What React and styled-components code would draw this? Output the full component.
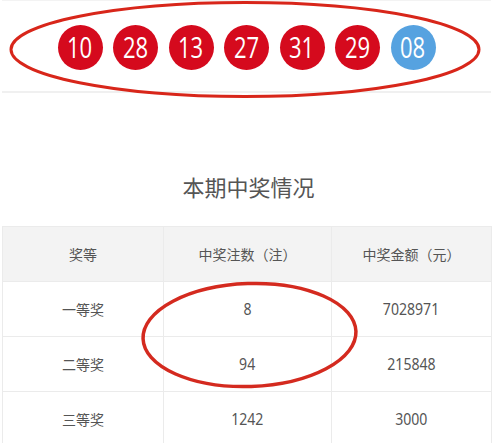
import React from "react";
import styled, { createGlobalStyle } from "styled-components";

const Global = createGlobalStyle`
  html, body { margin: 0; padding: 0; background: #fff; }
  body { width: 500px; height: 443px; overflow: hidden; font-family: "Noto Sans CJK SC", "Noto Sans", sans-serif; }
`;

const Page = styled.div`
  position: relative;
  width: 500px;
  height: 443px;
  overflow: hidden;
`;

const BallBar = styled.div`
  width: 489px;
  margin-left: 2px;
  height: 90px;
  border-top: 1px solid #f3f3f3;
  border-bottom: 2px solid #f0f0f0;
  display: flex;
  align-items: center;
  justify-content: center;
  gap: 10.5px;
  padding-top: 2px;
  box-sizing: border-box;
  height: 93px;
`;

const Ball = styled.div`
  width: 45px;
  height: 45px;
  border-radius: 50%;
  background: ${(p) => (p.$blue ? "#56a2e0" : "#d50a1d")};
  color: #fff;
  display: flex;
  align-items: center;
  justify-content: center;
  font-family: "Open Sans", "Noto Sans", sans-serif;
  font-size: 29px;
  line-height: 1;
`;

const BallNum = styled.span`
  display: inline-block;
  transform: scaleX(0.76);
  margin-top: -1px;
`;

const Title = styled.h2`
  margin: 78px 0 0;
  text-align: center;
  font-weight: 400;
  font-size: 22px;
  line-height: 30px;
  color: #555;
  padding-right: 3px;
`;

const Table = styled.div`
  margin: 25px 0 0 2px;
  width: 489px;
  display: grid;
  grid-template-columns: 161px 168px 160px;
  border-top: 1px solid #ebebeb;
  border-right: 1px solid #ebebeb;
`;

const Cell = styled.div`
  height: 55px;
  box-sizing: border-box;
  border-left: 1px solid #ebebeb;
  border-bottom: 1px solid #ebebeb;
  background: ${(p) => (p.$head ? "#f3f3f3" : "#fff")};
  display: flex;
  align-items: center;
  justify-content: center;
  color: #555;
  font-size: ${(p) => (p.$num ? "16px" : "14px")};
  font-family: ${(p) =>
    p.$num ? '"Noto Sans", "Open Sans", sans-serif' : '"Noto Sans CJK SC", sans-serif'};
`;

const NumText = styled.span`
  display: inline-block;
  transform: scaleX(0.88);
`;

const Annotation = styled.svg`
  position: absolute;
  left: 0;
  top: 0;
  pointer-events: none;
`;

const balls = ["10", "28", "13", "27", "31", "29"];
const rows = [
  ["一等奖", "8", "7028971"],
  ["二等奖", "94", "215848"],
  ["三等奖", "1242", "3000"],
];

export default function App() {
  return (
    <Page>
      <Global />
      <BallBar>
        {balls.map((b) => (
          <Ball key={b}>
            <BallNum>{b}</BallNum>
          </Ball>
        ))}
        <Ball $blue>
          <BallNum>08</BallNum>
        </Ball>
      </BallBar>
      <Title>本期中奖情况</Title>
      <Table>
        <Cell $head>奖等</Cell>
        <Cell $head>中奖注数（注）</Cell>
        <Cell $head>中奖金额（元）</Cell>
        {rows.map((r) => (
          <React.Fragment key={r[0]}>
            <Cell>{r[0]}</Cell>
            <Cell $num>
              <NumText>{r[1]}</NumText>
            </Cell>
            <Cell $num>
              <NumText>{r[2]}</NumText>
            </Cell>
          </React.Fragment>
        ))}
      </Table>
      <Annotation width="500" height="443" viewBox="0 0 500 443">
        <ellipse cx="245" cy="49.5" rx="234" ry="47" fill="none" stroke="#d8261a" strokeWidth="3" />
        <ellipse
          cx="249.5"
          cy="335"
          rx="106.5"
          ry="51.5"
          fill="none"
          stroke="#d42a1f"
          strokeWidth="3.5"
          transform="rotate(-2 249.5 335)"
        />
      </Annotation>
    </Page>
  );
}
